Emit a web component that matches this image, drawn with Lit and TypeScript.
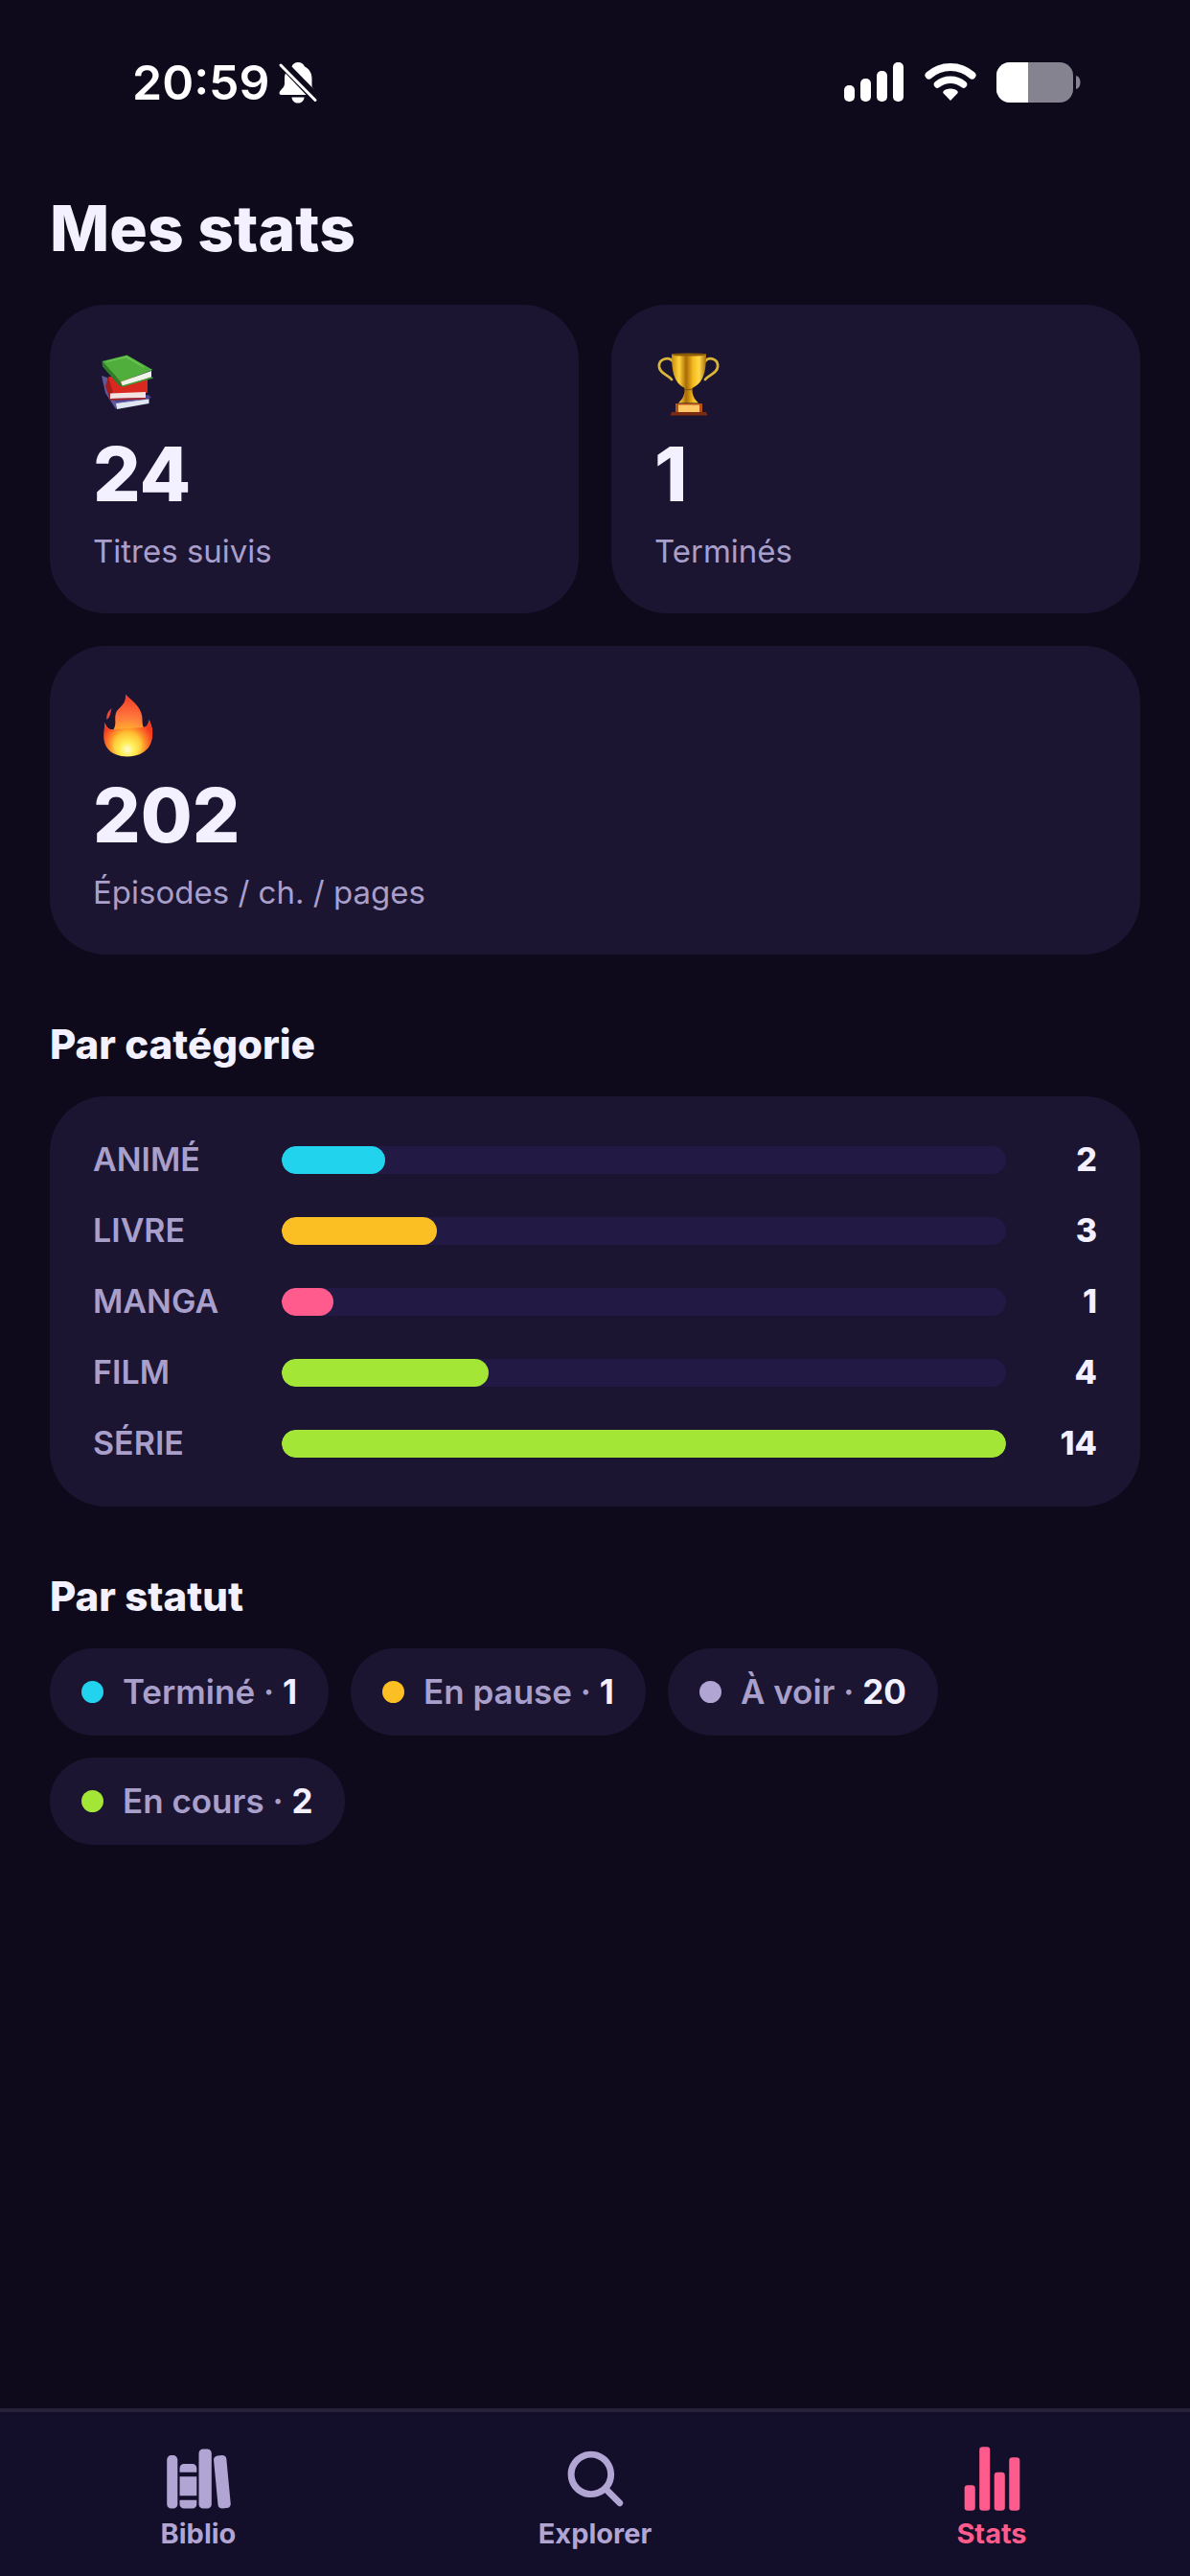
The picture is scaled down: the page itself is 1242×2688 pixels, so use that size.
import { LitElement, html, svg, css } from "lit";
import { customElement, property } from "lit/decorators.js";
import { classMap } from "lit/directives/class-map.js";

const booksEmoji = svg`
  <path d="M9 29L15 31L26 57L24 64L13 47Z" fill="#5d5a9c"/>
  <path d="M17 52L58 49L61 52L27 58Z" fill="#4a4390"/>
  <path d="M24 57.5L58.5 53V58L25 64Z" fill="#dfe6f2"/>
  <path d="M24 57.5L58.5 53" stroke="#6f6ab0" stroke-width="1.2"/>
  <path d="M16 30L57 31L57 47L18 48Z" fill="#d8281f"/>
  <path d="M16 30L21 47L18 54L13 40Z" fill="#a51d1b"/>
  <path d="M18 47.5L55 46V52L18 53Z" fill="#f3e3e3"/>
  <path d="M18 53L55 52V53.6L18 54.8Z" fill="#b0211f"/>
  <path d="M9.5 14L28 34.5L31 40.5L27 39L10 19.5Z" fill="#2f7d2b"/>
  <path d="M9.5 14L35.5 7.5L62.5 23L29 35.5Z" fill="#4fae3c"/>
  <path d="M29 35.5L61 24V30.5L31 40Z" fill="#eef3ea"/>
  <path d="M31 40L62.5 31" stroke="#3f9a35" stroke-width="1.4"/>
  <path d="M14 14.5L35 9.5L53 20" fill="none" stroke="#74c95c" stroke-width="1.2"/>
`;

const trophyEmoji = svg`
  <defs>
    <linearGradient id="gold" x1="0" x2="1" y1="0" y2="0">
      <stop offset="0" stop-color="#c98a0c"/>
      <stop offset=".22" stop-color="#ffd23c"/>
      <stop offset=".42" stop-color="#a86a05"/>
      <stop offset=".62" stop-color="#f5bb1d"/>
      <stop offset=".8" stop-color="#ffd84a"/>
      <stop offset="1" stop-color="#a86d08"/>
    </linearGradient>
  </defs>
  <path d="M19 14C15 9 4 11 5 20C6 27 14 28 18 33M53 14C57 9 67 11 66 20C65 27 57 28 53 33"
    fill="none" stroke="#d9b63a" stroke-width="2.8" stroke-linecap="round"/>
  <path d="M18 6.500H54C54 24 52 36 39.500 42C39 48 41 53 46 57.500H25C30 53 32 48 31.500 42C20 36 18 24 18 6.500Z" fill="url(#gold)"/>
  <ellipse cx="36" cy="7" rx="18" ry="1.600" fill="#8d5b08"/>
  <path d="M31.500 43.500H39.500" stroke="#8a5a0a" stroke-width="1.4"/>
  <path d="M22 58H50V67H22Z" fill="#b5521a"/>
  <path d="M25 59.500H47V67H25Z" fill="#ffc766"/>
  <path d="M18 67H54L55.500 70.500H16.500Z" fill="#7c2a10"/>
`;

const fireEmoji = svg`
  <defs>
    <radialGradient id="flame" gradientUnits="userSpaceOnUse" cx="36" cy="63" r="54">
      <stop offset="0" stop-color="#fffbd0"/>
      <stop offset=".14" stop-color="#ffee55"/>
      <stop offset=".36" stop-color="#ffb52e"/>
      <stop offset=".62" stop-color="#ff7a3c"/>
      <stop offset="1" stop-color="#f5402c"/>
    </radialGradient>
    <radialGradient id="edge" gradientUnits="userSpaceOnUse" cx="36" cy="58" r="27">
      <stop offset=".5" stop-color="#ff4a1c" stop-opacity="0"/>
      <stop offset="1" stop-color="#f5321c" stop-opacity=".9"/>
    </radialGradient>
  </defs>
  <path d="M34 5.500C39 11 49 17 51 27C52 32 51 37 53 40C57 39 58 36 58.500 32C61 37 62.500 42 62 48C61.500 58 56 70 36 70.500C18 70 11.500 60 11.500 50C11.500 45 12 40 12.500 35C14 40 17 43 21.500 42C25 37 22 31 24 25C26 19 35 17 34 5.500Z" fill="url(#flame)"/>
  <path d="M53 40C57 39 58 36 58.500 32C61 37 62.500 42 62 48C61.500 58 56 70 36 70.500C18 70 11.500 60 11.500 50C11.500 45 12 40 12.500 35C14 40 17 43 21.500 42Z" fill="url(#edge)"/>
  <path d="M19.500 20C18 25 19 28 14.500 32C13.500 27 16 23 19.500 20Z" fill="#e2483c"/>
`;

const libraryIcon = svg`
  <path d="M64 480H48a32 32 0 01-32-32V112a32 32 0 0132-32h16a32 32 0 0132 32v336a32 32 0 01-32 32zM240 176a32 32 0 00-32-32h-64a32 32 0 00-32 32v28a4 4 0 004 4h120a4 4 0 004-4zM112 448a32 32 0 0032 32h64a32 32 0 0032-32v-30a2 2 0 00-2-2H114a2 2 0 00-2 2z"/>
  <rect x="112" y="240" width="128" height="144" rx="2"/>
  <path d="M320 480h-32a32 32 0 01-32-32V64a32 32 0 0132-32h32a32 32 0 0132 32v384a32 32 0 01-32 32zM495.890 445.450l-32.230-340c-1.480-15.650-16.940-27-34.530-25.310l-31.850 3c-17.590 1.670-30.650 15.710-29.170 31.360l32.230 340c1.480 15.650 16.940 27 34.530 25.310l31.850-3c17.590-1.670 30.650-15.710 29.170-31.360z"/>
`;

const searchIcon = svg`
  <path d="M456.690 421.390L362.600 327.300a173.810 173.810 0 0034.840-104.580C397.440 126.380 319.060 48 222.720 48S48 126.380 48 222.720s78.380 174.720 174.720 174.720A173.810 173.810 0 00327.300 362.600l94.090 94.090a25 25 0 0035.300-35.300zM97.920 222.720a124.800 124.800 0 11124.800 124.800 124.950 124.950 0 01-124.800-124.800z"/>
`;

const chartIcon = svg`
  <path d="M104 496H72a24 24 0 01-24-24V328a24 24 0 0124-24h32a24 24 0 0124 24v144a24 24 0 01-24 24zM328 496h-32a24 24 0 01-24-24V232a24 24 0 0124-24h32a24 24 0 0124 24v240a24 24 0 01-24 24zM440 496h-32a24 24 0 01-24-24V120a24 24 0 0124-24h32a24 24 0 0124 24v352a24 24 0 01-24 24zM216 496h-32a24 24 0 01-24-24V40a24 24 0 0124-24h32a24 24 0 0124 24v432a24 24 0 01-24 24z"/>
`;

@customElement("status-bar")
export class StatusBar extends LitElement {
  static styles = css`
    :host {
      display: flex;
      justify-content: space-between;
      align-items: center;
      padding: 56px 114px 0 138px;
      color: #ffffff;
    }
    .side {
      display: flex;
      align-items: center;
      height: 60px;
    }
    .clock {
      gap: 8px;
      font-size: 50px;
      line-height: 60px;
      font-weight: 600;
    }
    .radios {
      gap: 21px;
    }
    svg {
      display: block;
    }
  `;

  render() {
    return html`
      <div class="side clock">
        <time>20:59</time>
        <svg width="42" height="44" viewBox="0 0 42 44" fill="#fff" aria-hidden="true">
          <path d="M14.500 5.500C15.500 2.500 18 1 21 1c3.500 0 6 2 7 4.500 5 2.500 7.500 7 7.500 12.500v7.500c0 1.500 1.500 3 3.500 5z"/>
          <path d="M8 12.500L29.500 35H3.500C1.500 35 1 33 2 31.500 4 28.500 7 27 7 23v-6c0-1.600.3-3.100 1-4.500z"/>
          <path d="M14.500 37.500h13c-.5 4-3 6-6.500 6s-6-2-6.500-6z"/>
          <path d="M3 4L39 40.500" stroke="#fff" stroke-width="3" stroke-linecap="round"/>
        </svg>
      </div>
      <div class="side radios">
        <svg width="63" height="42" viewBox="0 0 63 42" fill="#fff" aria-hidden="true">
          <rect x="0" y="24" width="11" height="17" rx="5"/>
          <rect x="17" y="17" width="11" height="24" rx="5"/>
          <rect x="34" y="9" width="11" height="32" rx="5"/>
          <rect x="51" y="0" width="11" height="41" rx="5"/>
        </svg>
        <svg width="54" height="42" viewBox="0 0 54 42" fill="none" stroke="#fff" aria-hidden="true">
          <path d="M4.500 13.500C17 2 37 2 49.500 13.500" stroke-width="8" stroke-linecap="round"/>
          <path d="M13.500 23C21 16.500 33 16.500 40.500 23" stroke-width="7.500" stroke-linecap="round"/>
          <path d="M27 27.500c3.500 0 5.500 1 7 2.200 1 .9 1 2 .2 2.900L27 40l-7.200-7.400c-.8-.9-.8-2 .2-2.900 1.500-1.200 3.500-2.200 7-2.200z" fill="#fff" stroke="none"/>
        </svg>
        <svg width="88" height="42" viewBox="0 0 88 42" aria-hidden="true">
          <rect width="80" height="42" rx="14" fill="#868391"/>
          <path d="M14 0H33V42H14A14 14 0 0 1 0 28V14A14 14 0 0 1 14 0Z" fill="#fff"/>
          <path d="M83 14c3.500 1 4.500 4 4.500 7s-1 6-4.500 7z" fill="#868391"/>
        </svg>
      </div>
    `;
  }
}

@customElement("stat-card")
export class StatCard extends LitElement {
  @property() value = "";
  @property() label = "";
  @property({ attribute: false }) art: unknown;

  static styles = css`
    :host {
      display: flex;
      flex-direction: column;
      gap: 13px;
      padding: 45px;
      border-radius: 58px;
      background: #1b1532;
    }
    .art {
      display: block;
      width: 72px;
      height: 72px;
    }
    .value {
      color: #f3f0ff;
      font-size: 78px;
      line-height: 94px;
      font-weight: 800;
    }
    .label {
      color: #a99fcb;
      font-size: 33px;
      line-height: 40px;
    }
  `;

  render() {
    return html`
      <svg class="art" viewBox="0 0 72 72" aria-hidden="true">${this.art}</svg>
      <div class="value">${this.value}</div>
      <div class="label">${this.label}</div>
    `;
  }
}

@customElement("category-chart")
export class CategoryChart extends LitElement {
  @property({ attribute: false }) rows: { name: string; count: number; tone: string }[] = [];

  static styles = css`
    :host {
      display: block;
      padding: 46px 45px;
      border-radius: 58px;
      background: #1b1532;
    }
    .list {
      display: flex;
      flex-direction: column;
      gap: 34px;
      margin: 0;
      padding: 0;
      list-style: none;
    }
    .row {
      display: grid;
      grid-template-columns: 164px 1fr 62px;
      column-gap: 33px;
      align-items: center;
      font-size: 34px;
      line-height: 40px;
    }
    .name {
      color: #a99fcb;
      font-weight: 600;
    }
    .track {
      height: 29px;
      border-radius: 15px;
      background: #221a44;
      overflow: hidden;
    }
    .fill {
      height: 100%;
      border-radius: 15px;
    }
    .count {
      color: #f3f0ff;
      font-weight: 800;
      text-align: right;
    }
    .cyan { background: #22d3ee; }
    .amber { background: #fbbf24; }
    .pink { background: #ff5c8d; }
    .lime { background: #a3e635; }
  `;

  render() {
    const max = Math.max(...this.rows.map((r) => r.count));
    return html`
      <ul class="list">
        ${this.rows.map(
          (r) => html`
            <li class="row">
              <span class="name">${r.name}</span>
              <div class="track">
                <div class=${classMap({ fill: true, [r.tone]: true })} style="width:${(r.count / max) * 100}%"></div>
              </div>
              <span class="count">${r.count}</span>
            </li>
          `,
        )}
      </ul>
    `;
  }
}

@customElement("tab-bar")
export class TabBar extends LitElement {
  static styles = css`
    :host {
      display: block;
      border-top: 4px solid #272139;
      background: #130e29;
    }
    .tabs {
      display: grid;
      grid-template-columns: repeat(3, 1fr);
    }
    .tab {
      display: flex;
      flex-direction: column;
      align-items: center;
      gap: 6px;
      padding: 34px 0 28px;
      color: #b0a5d3;
      font-size: 29px;
      line-height: 32px;
      font-weight: 700;
      text-decoration: none;
    }
    .active {
      color: #ff5c8d;
    }
    .icon {
      display: block;
      width: 71px;
      height: 71px;
      fill: currentColor;
    }
  `;

  render() {
    const tabs = [
      { label: "Biblio", icon: libraryIcon, active: false },
      { label: "Explorer", icon: searchIcon, active: false },
      { label: "Stats", icon: chartIcon, active: true },
    ];
    return html`
      <nav class="tabs">
        ${tabs.map(
          (t) => html`
            <a
              href="#${t.label.toLowerCase()}"
              class=${classMap({ tab: true, active: t.active })}
              aria-current=${t.active ? "page" : "false"}
            >
              <svg class="icon" viewBox="0 0 512 512" aria-hidden="true">${t.icon}</svg>
              <span>${t.label}</span>
            </a>
          `,
        )}
      </nav>
    `;
  }
}

@customElement("app-root")
export class AppRoot extends LitElement {
  static styles = css`
    :host {
      display: flex;
      flex-direction: column;
      min-height: 100vh;
      background: #0e0a1b;
      color: #f3f0ff;
      font-family: Inter, "Liberation Sans", sans-serif;
    }
    .content {
      flex: 1;
      padding: 82px 52px 52px;
    }
    .title {
      margin: 0 0 40px;
      font-size: 66px;
      line-height: 80px;
      font-weight: 800;
    }
    .cards {
      display: grid;
      grid-template-columns: 1fr 1fr;
      gap: 34px;
    }
    .wide {
      grid-column: 1 / -1;
    }
    .heading {
      margin: 69px 0 29px;
      font-size: 42px;
      line-height: 50px;
      font-weight: 800;
    }
    .chips {
      display: flex;
      flex-wrap: wrap;
      gap: 23px;
      margin: 0;
      padding: 0;
      list-style: none;
    }
    .chip {
      display: flex;
      align-items: center;
      gap: 20px;
      padding: 25px 33px 26px;
      border-radius: 46px;
      background: #1b1532;
      color: #a99fcb;
      font-size: 35px;
      line-height: 40px;
      font-weight: 600;
    }
    .number {
      color: #f3f0ff;
      font-weight: 700;
    }
    .dot {
      width: 23px;
      height: 23px;
      border-radius: 50%;
    }
    .cyan { background: #22d3ee; }
    .amber { background: #fbbf24; }
    .lilac { background: #b0a5d3; }
    .lime { background: #a3e635; }
  `;

  private categories = [
    { name: "ANIMÉ", count: 2, tone: "cyan" },
    { name: "LIVRE", count: 3, tone: "amber" },
    { name: "MANGA", count: 1, tone: "pink" },
    { name: "FILM", count: 4, tone: "lime" },
    { name: "SÉRIE", count: 14, tone: "lime" },
  ];

  private statuses = [
    { name: "Terminé", count: 1, tone: "cyan" },
    { name: "En pause", count: 1, tone: "amber" },
    { name: "À voir", count: 20, tone: "lilac" },
    { name: "En cours", count: 2, tone: "lime" },
  ];

  render() {
    return html`
      <status-bar></status-bar>
      <main class="content">
        <h1 class="title">Mes stats</h1>
        <section class="cards">
          <stat-card .art=${booksEmoji} value="24" label="Titres suivis"></stat-card>
          <stat-card .art=${trophyEmoji} value="1" label="Terminés"></stat-card>
          <stat-card class="wide" .art=${fireEmoji} value="202" label="Épisodes / ch. / pages"></stat-card>
        </section>
        <h2 class="heading">Par catégorie</h2>
        <category-chart .rows=${this.categories}></category-chart>
        <h2 class="heading">Par statut</h2>
        <ul class="chips">
          ${this.statuses.map(
            (s) => html`
              <li class="chip">
                <span class=${classMap({ dot: true, [s.tone]: true })}></span>
                <span>${s.name} · <span class="number">${s.count}</span></span>
              </li>
            `,
          )}
        </ul>
      </main>
      <tab-bar></tab-bar>
    `;
  }
}
